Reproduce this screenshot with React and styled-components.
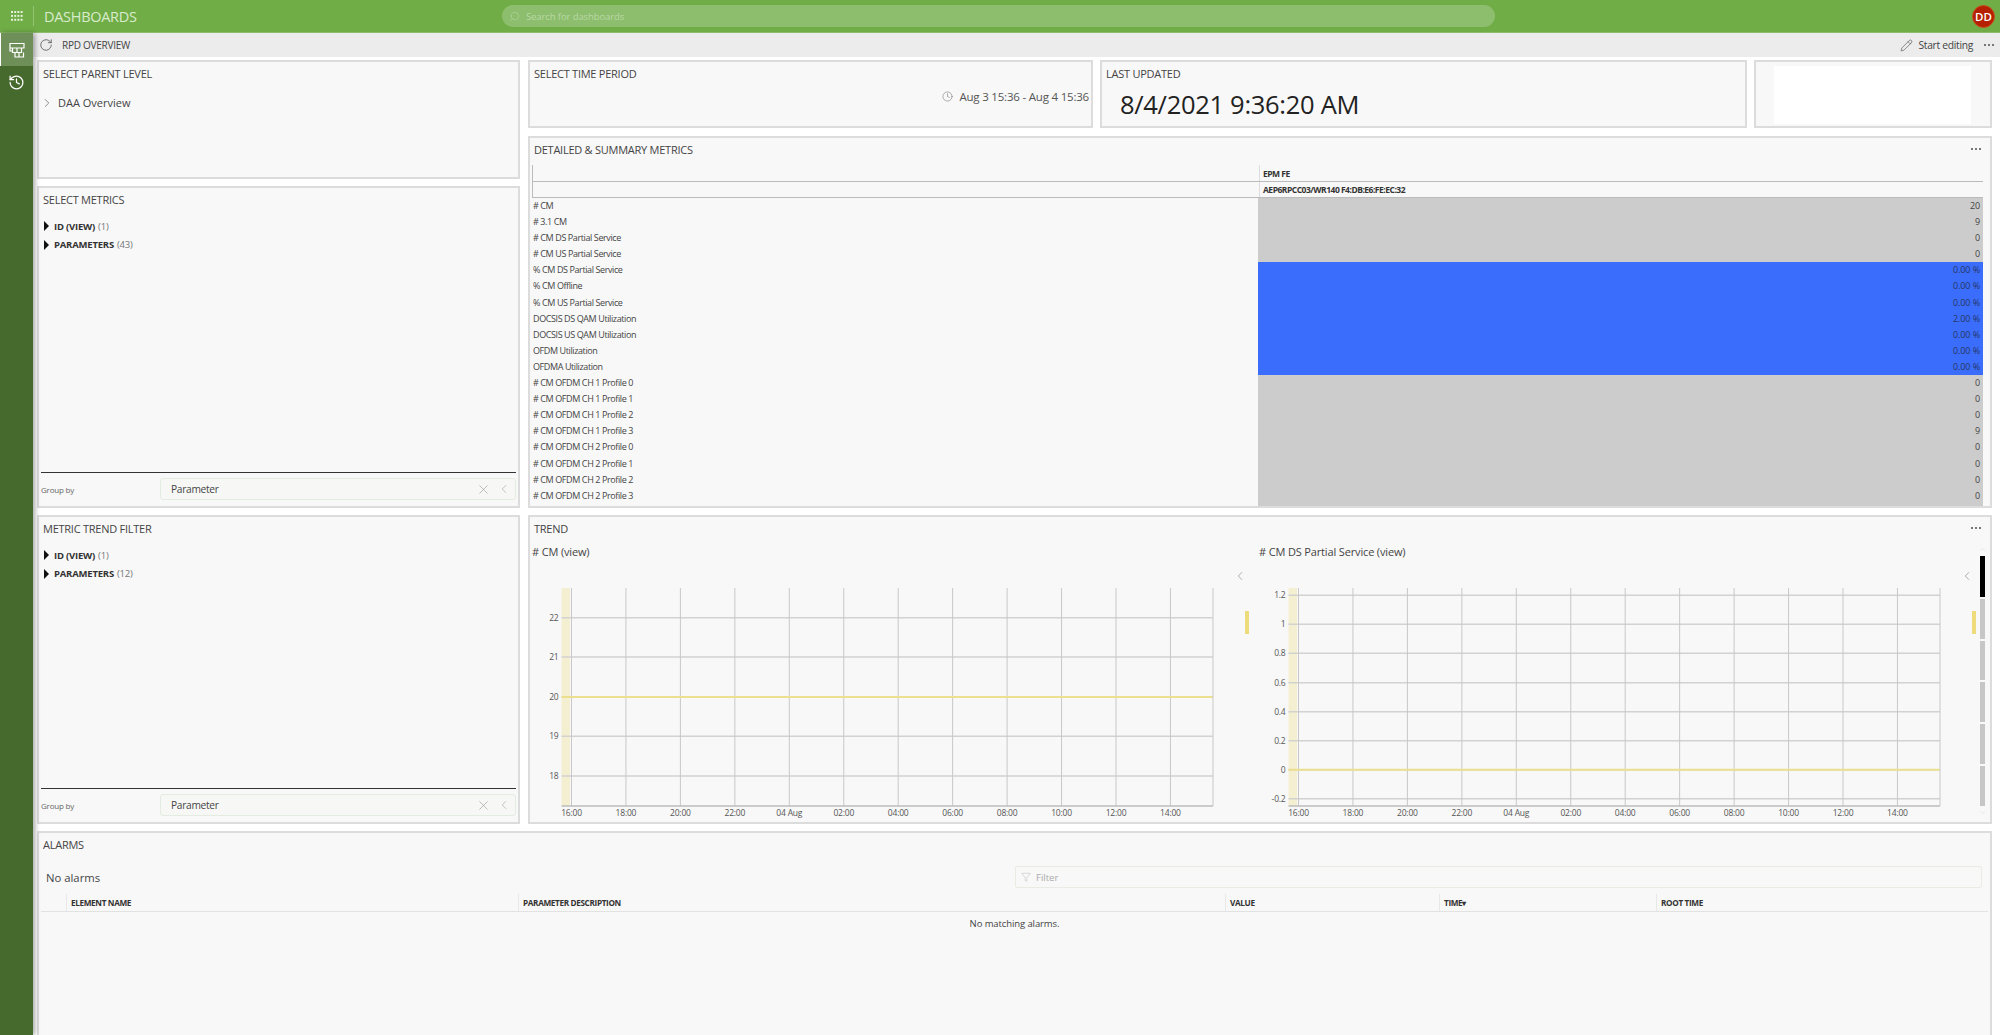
import React from "react";
import styled, { createGlobalStyle } from "styled-components";
import { History, Pencil, RotateCw, Search, X, ChevronLeft, ChevronRight, ChevronUp, ChevronDown, Clock, Filter } from "lucide-react";

const GlobalStyle = createGlobalStyle`
  html, body {
    margin: 0;
    padding: 0;
    background: #fff;
    font-family: "Open Sans", "Noto Sans", sans-serif;
    overflow: hidden;
  }
  * { box-sizing: border-box; }
`;

const Page = styled.div`
  width: 2000px;
  height: 1035px;
  display: flex;
  flex-direction: column;
  overflow: hidden;
`;
const TopBar = styled.div`
  height: 33px;
  flex: none;
  background: #70ad47;
  border-bottom: 1px solid #8cbc6c;
  display: flex;
  align-items: center;
`;
const AppsButton = styled.div`
  width: 34px;
  height: 20px;
  display: flex;
  align-items: center;
  justify-content: center;
  border-right: 1px solid #94c475;
`;
const AppName = styled.div`
  margin-left: 10px;
  width: 458px;
  font-size: 14.5px;
  letter-spacing: -0.3px;
  color: #d9ebcc;
`;
const SearchBox = styled.div`
  width: 993px;
  height: 22px;
  border-radius: 11px;
  background: #8dbe6e;
  display: flex;
  align-items: center;
  padding-left: 7px;
  gap: 6px;
  color: #b9d8a5;
  font-size: 9.5px;
  letter-spacing: -0.1px;
`;
const Avatar = styled.div`
  margin-left: auto;
  margin-right: 5px;
  width: 23px;
  height: 23px;
  border-radius: 50%;
  background: #b52100;
  border: 1px solid #c9501f;
  color: #fff;
  font-size: 11.5px;
  font-weight: 600;
  display: flex;
  align-items: center;
  justify-content: center;
`;
const Body = styled.div`
  flex: 1;
  display: flex;
  min-height: 0;
`;
const Sidebar = styled.div`
  width: 33px;
  flex: none;
  background: #46692d;
  box-shadow: 2px 0 5px rgba(0, 0, 0, 0.35);
  position: relative;
  z-index: 1;
`;
const SideItem = styled.div`
  height: 33px;
  display: flex;
  align-items: center;
  justify-content: center;
  color: #fff;
  background: ${(props) => (props.$active ? "#6e8f58" : "transparent")};
  border-left: ${(props) => (props.$active ? "1px solid #fff" : "none")};
`;
const Main = styled.div`
  flex: 1;
  min-width: 0;
  display: flex;
  flex-direction: column;
`;
const ToolBar = styled.div`
  height: 24px;
  flex: none;
  background: #ececec;
  display: flex;
  align-items: center;
  padding: 0 6px 0 6px;
  color: #444;
`;
const PageTitle = styled.div`
  margin-left: 9px;
  font-size: 10px;
  letter-spacing: -0.25px;
`;
const EditButton = styled.div`
  margin-left: auto;
  display: flex;
  align-items: center;
  gap: 5px;
  font-size: 10.3px;
  letter-spacing: -0.3px;
`;
const Dots = styled.div`
  display: flex;
  gap: 2px;
  margin-left: ${(props) => props.$left || 0}px;
  span {
    width: 2px;
    height: 2px;
    background: #777;
  }
`;
const Content = styled.div`
  flex: 1;
  min-height: 0;
  padding: 3px 8px 0 4px;
  display: flex;
  flex-direction: column;
  gap: 7px;
`;
const Upper = styled.div`
  height: 764px;
  flex: none;
  display: flex;
  gap: 8px;
`;
const LeftColumn = styled.div`
  width: 483px;
  flex: none;
  display: flex;
  flex-direction: column;
  gap: 7px;
`;
const RightColumn = styled.div`
  flex: 1;
  min-width: 0;
  display: flex;
  flex-direction: column;
`;
const TopRow = styled.div`
  height: 68px;
  flex: none;
  margin-bottom: 8px;
  display: flex;
  gap: 7px;
`;
const Panel = styled.div`
  background: #f8f8f8;
  border: 2px solid #dcdcdc;
  display: flex;
  flex-direction: column;
  width: ${(props) => (props.$width ? props.$width + "px" : "auto")};
  height: ${(props) => (props.$height ? props.$height + "px" : "auto")};
  flex: ${(props) => (props.$width || props.$height ? "none" : "1")};
  min-height: 0;
`;
const TrendPanel = styled(Panel)`
  margin-top: 7px;
`;
const PanelHeader = styled.div`
  height: 24px;
  flex: none;
  display: flex;
  align-items: center;
  justify-content: space-between;
  padding: 0 9px 2px 4px;
  font-size: 11px;
  letter-spacing: -0.25px;
  color: #444;
`;
const ParentRow = styled.div`
  display: flex;
  align-items: center;
  gap: 4px;
  margin: 9px 0 0 1px;
  font-size: 11px;
  color: #444;
`;
const TreeList = styled.div`
  margin-top: 7px;
  padding-left: 5px;
  display: flex;
  flex-direction: column;
  gap: 4.5px;
`;
const TreeRow = styled.div`
  height: 14px;
  display: flex;
  align-items: center;
  font-size: 9.5px;
  font-weight: 700;
  color: #333;
  letter-spacing: -0.2px;
`;
const Triangle = styled.span`
  width: 0;
  height: 0;
  margin-right: 5px;
  border-left: 5px solid #111;
  border-top: 5px solid transparent;
  border-bottom: 5px solid transparent;
`;
const TreeCount = styled.span`
  margin-left: 3px;
  font-weight: 400;
  color: #777;
`;
const GroupBy = styled.div`
  margin: auto 2px 0 2px;
  height: 34px;
  flex: none;
  border-top: 1.5px solid #333;
  display: flex;
  align-items: center;
  justify-content: space-between;
  padding-bottom: 1px;
  font-size: 8px;
  letter-spacing: -0.2px;
  color: #666;
`;
const SelectBox = styled.div`
  width: 356px;
  height: 22px;
  background: #f7f8f6;
  border: 1px solid #e4ebe0;
  border-radius: 3px;
  display: flex;
  align-items: center;
  padding: 0 4px 0 10px;
  font-size: 10.2px;
  letter-spacing: -0.3px;
  color: #444;
`;
const SelectIcons = styled.div`
  margin-left: auto;
  display: flex;
  align-items: center;
  gap: 6px;
  color: #999;
`;
const TimeValue = styled.div`
  display: flex;
  justify-content: flex-end;
  align-items: center;
  gap: 6px;
  margin-top: 3px;
  padding-right: 2px;
  font-size: 11.5px;
  letter-spacing: -0.2px;
  color: #555;
`;
const UpdatedValue = styled.div`
  margin: 1px 0 0 18px;
  font-size: 25.5px;
  letter-spacing: -0.3px;
  color: #222;
`;
const BlankPanel = styled(Panel)`
  padding: 4px 19px 0 18px;
`;
const WhiteBox = styled.div`
  background: #fff;
  height: 58px;
`;
const MetricTable = styled.div`
  flex: 1;
  min-height: 0;
  margin: 3px 7px 0 2px;
  display: flex;
  flex-direction: column;
`;
const HeadRow = styled.div`
  display: grid;
  grid-template-columns: 726px 1fr;
  height: ${(props) => props.$height}px;
  flex: none;
  border-left: 1px solid #bbb;
  border-bottom: 1px solid #bbb;
  font-size: 8.5px;
  font-weight: 700;
  letter-spacing: -0.5px;
  color: #333;
  div:last-child {
    border-left: 1px solid #ddd;
    padding-left: 3px;
    display: flex;
    align-items: center;
  }
`;
const Rows = styled.div`
  flex: 1;
  min-height: 0;
  display: flex;
  flex-direction: column;
`;
const MetricRow = styled.div`
  display: grid;
  grid-template-columns: 726px 1fr;
  height: 16.1px;
  flex: none;
  &:last-child {
    flex: 1;
  }
`;
const MetricName = styled.div`
  padding-left: 1px;
  font-size: 9px;
  line-height: 16px;
  letter-spacing: -0.4px;
  color: #444;
`;
const MetricValue = styled.div`
  background: ${(props) => (props.$blue ? "#3a6dfc" : "#cccccc")};
  text-align: right;
  padding-right: 3px;
  font-size: 9px;
  line-height: 16px;
  letter-spacing: -0.1px;
  color: ${(props) => (props.$blue ? "#26365f" : "#444")};
`;
const TrendBody = styled.div`
  flex: 1;
  min-height: 0;
  display: flex;
  padding-left: 1px;
`;
const ChartCell = styled.div`
  width: ${(props) => props.$width}px;
  flex: none;
  display: flex;
  flex-direction: column;
`;
const ChartTitle = styled.div`
  height: 22px;
  flex: none;
  padding-left: 1px;
  font-size: 11px;
  line-height: 22px;
  letter-spacing: -0.15px;
  color: #444;
`;
const ChartRow = styled.div`
  display: flex;
`;
const Legend = styled.div`
  padding: 6px 0 0 12px;
  display: flex;
  flex-direction: column;
  color: #777;
`;
const LegendBar = styled.div`
  margin: 28px 0 0 12px;
  width: 4px;
  height: 23px;
  background: #eedc7c;
`;
const ScrollTrack = styled.div`
  width: 8px;
  flex: none;
  padding-top: 4px;
  display: flex;
  flex-direction: column;
  align-items: center;
  gap: 2px;
  color: #ccc;
`;
const ScrollPart = styled.div`
  width: 5px;
  height: ${(props) => props.$height}px;
  background: ${(props) => (props.$active ? "#000" : "#c6c6c6")};
`;
const AlarmPanel = styled(Panel)`
  flex: 1;
  border-bottom: none;
`;
const AlarmTop = styled.div`
  margin-top: 8px;
  height: 24px;
  flex: none;
  display: flex;
  align-items: center;
  justify-content: space-between;
  padding: 0 8px 0 7px;
  font-size: 11.3px;
  color: #444;
`;
const FilterBox = styled.div`
  width: 967px;
  height: 22px;
  border: 1px solid #e8ece5;
  border-radius: 2px;
  display: flex;
  align-items: center;
  gap: 5px;
  padding-left: 5px;
  font-size: 9.5px;
  color: #aaa;
`;
const AlarmHead = styled.div`
  margin: 5px 2px 0 2px;
  height: 18px;
  flex: none;
  display: grid;
  grid-template-columns: 25px 452px 707px 214px 217px 1fr;
  border-bottom: 1px solid #e2e2e2;
  font-size: 8.2px;
  font-weight: 700;
  letter-spacing: -0.35px;
  color: #333;
`;
const AlarmColumn = styled.div`
  display: flex;
  align-items: center;
  padding-left: 4px;
  border-left: ${(props) => (props.$plain ? "none" : "1px solid #e8e8e8")};
`;
const NoMatch = styled.div`
  margin-top: 5px;
  text-align: center;
  font-size: 9.5px;
  letter-spacing: -0.1px;
  color: #444;
`;

const metrics = [
  ["# CM", "20"],
  ["# 3.1 CM", "9"],
  ["# CM DS Partial Service", "0"],
  ["# CM US Partial Service", "0"],
  ["% CM DS Partial Service", "0.00 %", true],
  ["% CM Offline", "0.00 %", true],
  ["% CM US Partial Service", "0.00 %", true],
  ["DOCSIS DS QAM Utilization", "2.00 %", true],
  ["DOCSIS US QAM Utilization", "0.00 %", true],
  ["OFDM Utilization", "0.00 %", true],
  ["OFDMA Utilization", "0.00 %", true],
  ["# CM OFDM CH 1 Profile 0", "0"],
  ["# CM OFDM CH 1 Profile 1", "0"],
  ["# CM OFDM CH 1 Profile 2", "0"],
  ["# CM OFDM CH 1 Profile 3", "9"],
  ["# CM OFDM CH 2 Profile 0", "0"],
  ["# CM OFDM CH 2 Profile 1", "0"],
  ["# CM OFDM CH 2 Profile 2", "0"],
  ["# CM OFDM CH 2 Profile 3", "0"],
];

const timeLabels = ["16:00", "18:00", "20:00", "22:00", "04 Aug", "02:00", "04:00", "06:00", "08:00", "10:00", "12:00", "14:00"];

const PLOT_LEFT = 30.5;
const PLOT_RIGHT = 682;
const PLOT_TOP = 25;
const PLOT_BOTTOM = 243;

function TrendChart({ ticks, lineY }) {
  return (
    <svg width="690" height="259" style={{ display: "block", flex: "none" }}>
      <rect x={PLOT_LEFT} y={PLOT_TOP} width="8.5" height={PLOT_BOTTOM - PLOT_TOP} fill="#f5efd2" />
      {ticks.map((t) => (
        <g key={t.label}>
          <line x1={PLOT_LEFT} x2={PLOT_RIGHT} y1={t.y} y2={t.y} stroke="#d2d2d2" strokeWidth="1.5" />
          <text x={PLOT_LEFT - 3} y={t.y + 3} textAnchor="end" fontSize="8.5" letterSpacing="-0.2" fill="#555" fontFamily="Open Sans">
            {t.label}
          </text>
        </g>
      ))}
      {timeLabels.map((label, i) => {
        const x = PLOT_LEFT + 10 + i * 54.45;
        return (
          <g key={label}>
            <line x1={x} x2={x} y1={PLOT_TOP} y2={PLOT_BOTTOM} stroke="#c8c8c8" strokeWidth="1" />
            <text x={x} y={PLOT_BOTTOM + 9.5} textAnchor="middle" fontSize="8.5" letterSpacing="-0.2" fill="#555" fontFamily="Open Sans">
              {label}
            </text>
          </g>
        );
      })}
      <line x1={PLOT_LEFT} x2={PLOT_RIGHT} y1={lineY} y2={lineY} stroke="#ecdf8e" strokeWidth="2" />
      <line x1={PLOT_LEFT} x2={PLOT_RIGHT} y1={PLOT_BOTTOM} y2={PLOT_BOTTOM} stroke="#bdbdbd" strokeWidth="1.5" />
      <line x1={PLOT_RIGHT} x2={PLOT_RIGHT} y1={PLOT_TOP} y2={PLOT_BOTTOM} stroke="#c8c8c8" strokeWidth="1" />
    </svg>
  );
}

function DashboardIcon() {
  return (
    <svg width="16" height="16" viewBox="0 0 16 16" fill="none" stroke="#fff" strokeWidth="1.2">
      <path d="M1 1.5h14v4.5H1zM3.5 6v4.5h9V6M8 6v4.5M6 10.5v4.5h8.5v-4.5M10 10.5v4.5M1 6v3h2.5" />
    </svg>
  );
}

function AppsIcon() {
  const dots = [];
  for (let row = 0; row < 3; row++) {
    for (let col = 0; col < 4; col++) {
      dots.push(<rect key={row + "-" + col} x={col * 3.2} y={row * 3.9} width="2" height="2" fill="#e4f0da" />);
    }
  }
  return (
    <svg width="12" height="10" viewBox="0 0 12 10">
      {dots}
    </svg>
  );
}

function MoreDots({ left }) {
  return (
    <Dots $left={left}>
      <span />
      <span />
      <span />
    </Dots>
  );
}

function Tree({ count }) {
  return (
    <TreeList>
      <TreeRow>
        <Triangle />
        ID (VIEW) <TreeCount>(1)</TreeCount>
      </TreeRow>
      <TreeRow>
        <Triangle />
        PARAMETERS <TreeCount>({count})</TreeCount>
      </TreeRow>
    </TreeList>
  );
}

function GroupByBar() {
  return (
    <GroupBy>
      Group by
      <SelectBox>
        Parameter
        <SelectIcons>
          <X size={15} strokeWidth={1} />
          <ChevronLeft size={14} strokeWidth={1} />
        </SelectIcons>
      </SelectBox>
    </GroupBy>
  );
}

const chart1Ticks = [
  { label: "22", y: 54.7 },
  { label: "21", y: 94 },
  { label: "20", y: 134 },
  { label: "19", y: 173.3 },
  { label: "18", y: 213 },
];
const chart2Ticks = [
  { label: "1.2", y: 32.3 },
  { label: "1", y: 61.3 },
  { label: "0.8", y: 90.3 },
  { label: "0.6", y: 119.7 },
  { label: "0.4", y: 148.7 },
  { label: "0.2", y: 177.7 },
  { label: "0", y: 206.7 },
  { label: "-0.2", y: 235.7 },
];

export default function App() {
  return (
    <Page>
      <GlobalStyle />
      <TopBar>
        <AppsButton>
          <AppsIcon />
        </AppsButton>
        <AppName>DASHBOARDS</AppName>
        <SearchBox>
          <Search size={11} strokeWidth={1.2} style={{ transform: "scaleX(-1)" }} />
          Search for dashboards
        </SearchBox>
        <Avatar>DD</Avatar>
      </TopBar>
      <Body>
        <Sidebar>
          <SideItem $active>
            <DashboardIcon />
          </SideItem>
          <SideItem>
            <History size={17} strokeWidth={1.8} />
          </SideItem>
        </Sidebar>
        <Main>
          <ToolBar>
            <RotateCw size={14} strokeWidth={1.2} />
            <PageTitle>RPD OVERVIEW</PageTitle>
            <EditButton>
              <Pencil size={13} strokeWidth={1.1} />
              Start editing
            </EditButton>
            <MoreDots left={11} />
          </ToolBar>
          <Content>
            <Upper>
              <LeftColumn>
                <Panel $height={119}>
                  <PanelHeader>SELECT PARENT LEVEL</PanelHeader>
                  <ParentRow>
                    <ChevronRight size={14} strokeWidth={1} />
                    DAA Overview
                  </ParentRow>
                </Panel>
                <Panel>
                  <PanelHeader>SELECT METRICS</PanelHeader>
                  <Tree count={43} />
                  <GroupByBar />
                </Panel>
                <Panel $height={309}>
                  <PanelHeader>METRIC TREND FILTER</PanelHeader>
                  <Tree count={12} />
                  <GroupByBar />
                </Panel>
              </LeftColumn>
              <RightColumn>
                <TopRow>
                  <Panel $width={565}>
                    <PanelHeader>SELECT TIME PERIOD</PanelHeader>
                    <TimeValue>
                      <Clock size={11} strokeWidth={1} />
                      Aug 3 15:36 - Aug 4 15:36
                    </TimeValue>
                  </Panel>
                  <Panel $width={647}>
                    <PanelHeader>LAST UPDATED</PanelHeader>
                    <UpdatedValue>8/4/2021 9:36:20 AM</UpdatedValue>
                  </Panel>
                  <BlankPanel $width={238}>
                    <WhiteBox />
                  </BlankPanel>
                </TopRow>
                <Panel $height={372}>
                  <PanelHeader>
                    DETAILED &amp; SUMMARY METRICS
                    <MoreDots />
                  </PanelHeader>
                  <MetricTable>
                    <HeadRow $height={17}>
                      <div />
                      <div>EPM FE</div>
                    </HeadRow>
                    <HeadRow $height={16}>
                      <div />
                      <div>AEP6RPCC03/WR140 F4:DB:E6:FE:EC:32</div>
                    </HeadRow>
                    <Rows>
                      {metrics.map(([name, value, blue]) => (
                        <MetricRow key={name}>
                          <MetricName>{name}</MetricName>
                          <MetricValue $blue={blue}>{value}</MetricValue>
                        </MetricRow>
                      ))}
                    </Rows>
                  </MetricTable>
                </Panel>
                <TrendPanel $height={309}>
                  <PanelHeader>
                    TREND
                    <MoreDots />
                  </PanelHeader>
                  <TrendBody>
                    <ChartCell $width={727}>
                      <ChartTitle># CM (view)</ChartTitle>
                      <ChartRow>
                        <TrendChart ticks={chart1Ticks} lineY={134} />
                        <Legend>
                          <ChevronLeft size={14} strokeWidth={1} />
                          <LegendBar />
                        </Legend>
                      </ChartRow>
                    </ChartCell>
                    <ChartCell $width={720}>
                      <ChartTitle># CM DS Partial Service (view)</ChartTitle>
                      <ChartRow>
                        <TrendChart ticks={chart2Ticks} lineY={206.7} />
                        <Legend>
                          <ChevronLeft size={14} strokeWidth={1} />
                          <LegendBar />
                        </Legend>
                      </ChartRow>
                    </ChartCell>
                    <ScrollTrack>
                      <ChevronUp size={9} strokeWidth={1} />
                      <ScrollPart $active $height={41} />
                      <ScrollPart $height={40} />
                      <ScrollPart $height={39} />
                      <ScrollPart $height={40} />
                      <ScrollPart $height={40} />
                      <ScrollPart $height={40} />
                      <ChevronDown size={9} strokeWidth={1} />
                    </ScrollTrack>
                  </TrendBody>
                </TrendPanel>
              </RightColumn>
            </Upper>
            <AlarmPanel>
              <PanelHeader>ALARMS</PanelHeader>
              <AlarmTop>
                No alarms
                <FilterBox>
                  <Filter size={10} strokeWidth={1} />
                  Filter
                </FilterBox>
              </AlarmTop>
              <AlarmHead>
                <AlarmColumn $plain />
                <AlarmColumn>ELEMENT NAME</AlarmColumn>
                <AlarmColumn>PARAMETER DESCRIPTION</AlarmColumn>
                <AlarmColumn>VALUE</AlarmColumn>
                <AlarmColumn>TIME▾</AlarmColumn>
                <AlarmColumn>ROOT TIME</AlarmColumn>
              </AlarmHead>
              <NoMatch>No matching alarms.</NoMatch>
            </AlarmPanel>
          </Content>
        </Main>
      </Body>
    </Page>
  );
}
